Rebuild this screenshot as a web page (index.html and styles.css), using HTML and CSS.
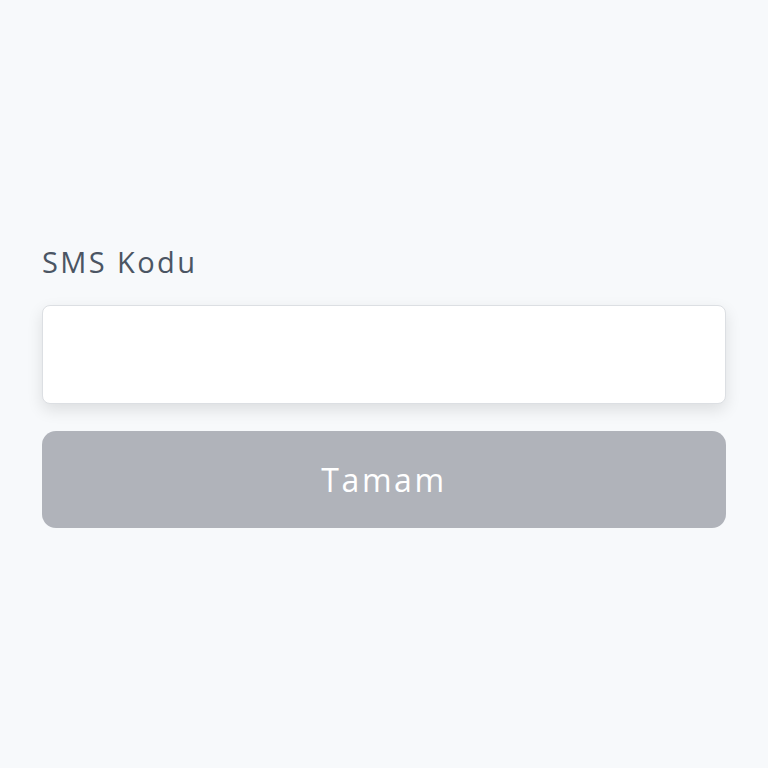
FILE: index.html
```html
<!DOCTYPE html>
<html lang="tr">
<head>
<meta charset="utf-8">
<link rel="stylesheet" href="styles.css">
</head>
<body>
<main class="page">
  <form class="form">
    <label class="label" for="sms">SMS Kodu</label>
    <input class="input" id="sms" type="text">
    <button class="button" type="button">Tamam</button>
  </form>
</main>
</body>
</html>
```
FILE: styles.css
```css
html, body {
  margin: 0;
  padding: 0;
  background: #f7f9fb;
}
.page {
  height: 768px;
  box-sizing: border-box;
  padding: 238px 42px 0;
  font-family: "Open Sans", "Noto Sans", sans-serif;
}
.form {
  display: flex;
  flex-direction: column;
}
.label {
  font-size: 29px;
  line-height: 48px;
  letter-spacing: 2.4px;
  color: #4b5563;
  margin-bottom: 19px;
}
.input {
  height: 99px;
  box-sizing: border-box;
  border: 1px solid #dcdfe3;
  border-radius: 8px;
  background: #fff;
  box-shadow: 0 6px 16px rgba(0, 0, 0, 0.11);
  outline: none;
  margin: 0 0 27px;
  padding: 0 20px;
}
.button {
  height: 97px;
  border: none;
  border-radius: 14px;
  background: #b0b3ba;
  color: #fff;
  font-family: inherit;
  font-size: 32px;
  letter-spacing: 2.6px;
}
```
